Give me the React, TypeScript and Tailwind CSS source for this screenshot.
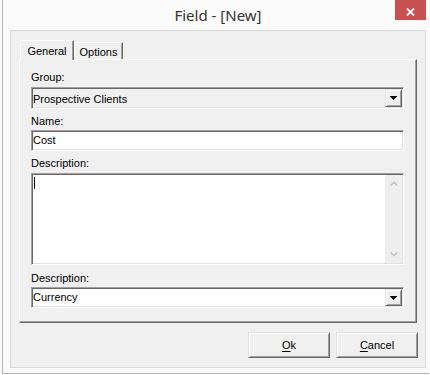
import React from "react";

const sunken =
  "border border-[#a0a0a0] border-r-white border-b-white shadow-[inset_1px_1px_0_#696969,inset_-1px_-1px_0_#e3e3e3]";
const raised =
  "border border-[#e3e3e3] border-r-[#696969] border-b-[#696969] shadow-[inset_1px_1px_0_#ffffff,inset_-1px_-1px_0_#a0a0a0]";

function DropArrow() {
  return (
    <svg width="7" height="4" viewBox="0 0 7 4" shapeRendering="crispEdges">
      <rect x="0" y="0" width="7" height="1" fill="#000" />
      <rect x="1" y="1" width="5" height="1" fill="#000" />
      <rect x="2" y="2" width="3" height="1" fill="#000" />
      <rect x="3" y="3" width="1" height="1" fill="#000" />
    </svg>
  );
}

function DropButton() {
  return (
    <div className={`w-[17px] my-[1px] mr-[1px] bg-[#f0f0f0] flex items-center justify-center ${raised}`}>
      <DropArrow />
    </div>
  );
}

export default function App() {
  return (
    <div className="w-[430px] h-[375px] bg-[#fbfbfb] pl-[2px] pr-[1px] pb-[1px] flex font-['Liberation_Sans',Arial,sans-serif] text-[11px] leading-[13px] text-black">
      <div className="flex-1 flex flex-col border-l border-b border-[#b4b4b4] pl-[7px] pr-[3px] pb-[5px]">
        {/* Title bar */}
        <div className="relative h-[30px] shrink-0 flex items-center justify-center">
          <span className="font-['Noto_Sans',sans-serif] text-[15px] leading-[20px] text-[#333333]">
            Field - [New]
          </span>
          <div className="absolute top-0 right-0 w-[31px] h-[20px] bg-[#c75050] flex items-center justify-center pt-[3px]">
            <svg width="9" height="8" viewBox="0 0 9 8">
              <path d="M1 0.5 L8 7.5 M8 0.5 L1 7.5" stroke="#ffffff" strokeWidth="1.8" />
            </svg>
          </div>
        </div>

        {/* Client area */}
        <div className="flex-1 bg-[#f0f0f0] border border-[#dadada] flex flex-col pt-[9px] px-[8px]">
          {/* Tabs */}
          <div className="h-[19px] ml-[1px] flex items-end">
            <div className="self-start relative z-10 h-[20px] w-[54px] bg-[#f0f0f0] border-t border-l border-r border-white border-r-[#696969] shadow-[inset_-1px_0_0_#a0a0a0] pt-[4px] text-center">
              General
            </div>
            <div className="h-[17px] w-[49px] bg-[#f0f0f0] border-t border-l border-r border-white border-r-[#696969] shadow-[inset_-1px_0_0_#a0a0a0] pt-[3px] text-center">
              Options
            </div>
          </div>

          {/* Panel */}
          <div className="h-[264px] border-t border-l border-r border-b border-white border-r-[#696969] border-b-[#696969] shadow-[inset_-1px_-1px_0_#a0a0a0] pl-[11px] pr-[12px] pt-[11px] flex flex-col">
            <div>Group:</div>
            <div className={`mt-[3px] h-[22px] bg-[#f0f0f0] flex ${sunken}`}>
              <div className="flex-1 flex items-center pl-[1px] pt-[3px]">Prospective Clients</div>
              <DropButton />
            </div>

            <div className="mt-[6px]">Name:</div>
            <div className={`mt-[2px] h-[21px] bg-white flex items-center pl-[1px] ${sunken}`}>Cost</div>

            <div className="mt-[6px]">Description:</div>
            <div className={`mt-[3px] h-[92px] bg-white flex ${sunken}`}>
              <div className="flex-1">
                <div className="ml-[2px] mt-[3px] w-px h-[12px] bg-black" />
              </div>
              <div className="w-[17px] my-[1px] mr-[1px] bg-[#eeeeee] flex flex-col justify-between">
                <div className="h-[17px] flex items-center justify-center">
                  <svg width="8" height="5" viewBox="0 0 8 5">
                    <path d="M0.7 4.5 L4 1.2 L7.3 4.5" fill="none" stroke="#c2c2c2" strokeWidth="1.5" />
                  </svg>
                </div>
                <div className="h-[17px] flex items-center justify-center">
                  <svg width="8" height="5" viewBox="0 0 8 5">
                    <path d="M0.7 0.5 L4 3.8 L7.3 0.5" fill="none" stroke="#c2c2c2" strokeWidth="1.5" />
                  </svg>
                </div>
              </div>
            </div>

            <div className="mt-[7px]">Description:</div>
            <div className={`mt-[2px] h-[21px] bg-white flex ${sunken}`}>
              <div className="flex-1 flex items-center pl-[1px]">Currency</div>
              <DropButton />
            </div>
          </div>

          {/* Buttons */}
          <div className="mt-[9px] mr-[-1px] flex justify-end gap-[6px]">
            <div className={`w-[82px] h-[26px] bg-[#f0f0f0] flex items-center justify-center ${raised}`}>
              <span>
                <span className="underline underline-offset-[2px]">O</span>k
              </span>
            </div>
            <div className={`w-[82px] h-[26px] bg-[#f0f0f0] flex items-center justify-center ${raised}`}>
              <span>
                <span className="underline underline-offset-[2px]">C</span>ancel
              </span>
            </div>
          </div>
        </div>
      </div>
    </div>
  );
}
